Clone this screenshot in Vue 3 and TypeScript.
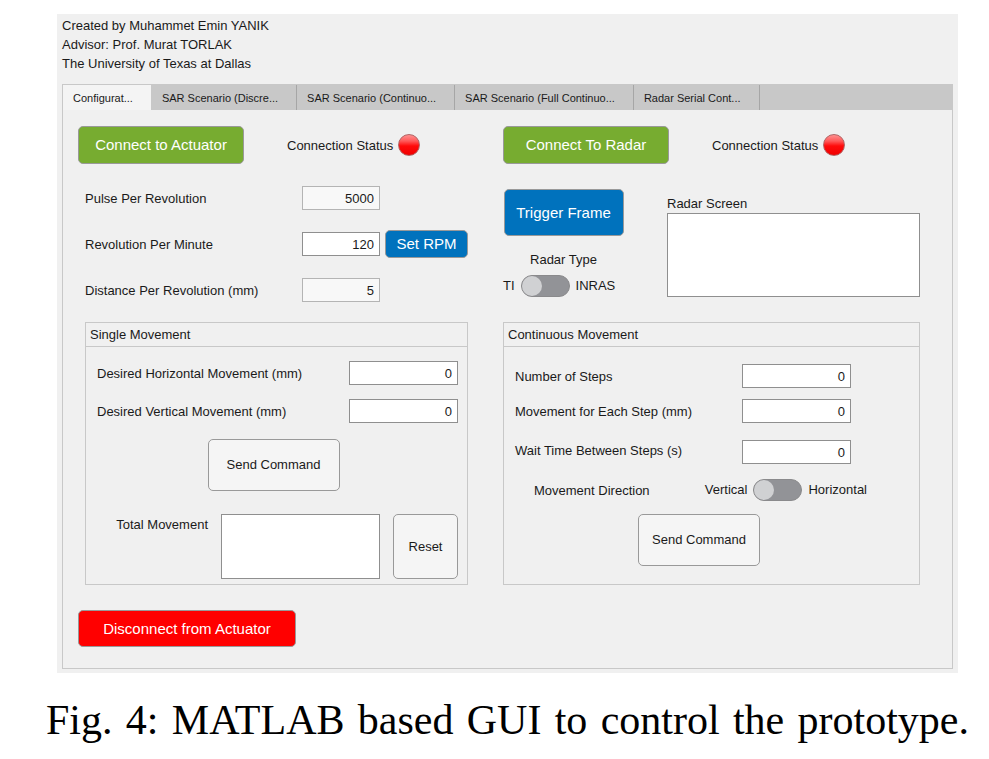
<script setup lang="ts">
import { reactive, ref } from 'vue'

interface Field {
  id: string
  label: string
  value: string
  readonly?: boolean
}

const tabs: string[] = [
  'Configurat...',
  'SAR Scenario (Discre...',
  'SAR Scenario (Continuo...',
  'SAR Scenario (Full Continuo...',
  'Radar Serial Cont...',
]
const activeTab = ref(0)

const motorFields = reactive<Field[]>([
  { id: 'pulse', label: 'Pulse Per Revolution', value: '5000', readonly: true },
  { id: 'rpm', label: 'Revolution Per Minute', value: '120' },
  { id: 'distance', label: 'Distance Per Revolution (mm)', value: '5', readonly: true },
])

const singleFields = reactive<Field[]>([
  { id: 'horizontal', label: 'Desired Horizontal Movement (mm)', value: '0' },
  { id: 'vertical', label: 'Desired Vertical Movement (mm)', value: '0' },
])

const stepFields = reactive<Field[]>([
  { id: 'steps', label: 'Number of Steps', value: '0' },
  { id: 'step-size', label: 'Movement for Each Step (mm)', value: '0' },
  { id: 'wait', label: 'Wait Time Between Steps (s)', value: '0' },
])

const radarInras = ref(false)
const directionHorizontal = ref(false)
const radarLog = ref('')
const totalMovement = ref('')
</script>

<template>
  <figure class="figure">
    <main class="window">
      <header class="credits">
        <div>Created by Muhammet Emin YANIK</div>
        <div>Advisor: Prof. Murat TORLAK</div>
        <div>The University of Texas at Dallas</div>
      </header>

      <section class="tab-group">
        <div class="tab-bar" role="tablist">
          <button
            v-for="(tab, i) in tabs"
            :key="tab"
            type="button"
            role="tab"
            class="tab"
            :class="{ active: i === activeTab }"
            :aria-selected="i === activeTab"
            @click="activeTab = i"
          >{{ tab }}</button>
        </div>

        <div class="panel">
          <div class="column">
            <div class="connect-row">
              <button type="button" class="btn green">Connect to Actuator</button>
              <div class="status">
                <span class="status-label">Connection Status</span>
                <span class="lamp"></span>
              </div>
            </div>

            <div class="settings motor">
              <div v-for="f in motorFields" :key="f.id" class="motor-row">
                <label :for="f.id">{{ f.label }}</label>
                <input :id="f.id" v-model="f.value" class="num" type="text" inputmode="numeric" :readonly="f.readonly" />
                <button v-if="f.id === 'rpm'" type="button" class="btn blue set-rpm">Set RPM</button>
              </div>
            </div>

            <fieldset class="group inset">
              <div class="group-title">Single Movement</div>
              <div class="group-body single">
                <div v-for="f in singleFields" :key="f.id" class="field-row">
                  <label :for="f.id">{{ f.label }}</label>
                  <input :id="f.id" v-model="f.value" class="num wide" type="text" inputmode="numeric" />
                </div>
                <button type="button" class="btn plain send">Send Command</button>
                <div class="total-row">
                  <label for="total">Total Movement</label>
                  <textarea id="total" v-model="totalMovement" class="box"></textarea>
                  <button type="button" class="btn plain" @click="totalMovement = ''">Reset</button>
                </div>
              </div>
            </fieldset>

            <button type="button" class="btn red disconnect">Disconnect from Actuator</button>
          </div>

          <div class="column">
            <div class="connect-row">
              <button type="button" class="btn green">Connect To Radar</button>
              <div class="status">
                <span class="status-label">Connection Status</span>
                <span class="lamp"></span>
              </div>
            </div>

            <div class="settings radar">
              <div class="radar-side">
                <button type="button" class="btn blue trigger">Trigger Frame</button>
                <label for="radar-type">Radar Type</label>
                <div class="switch-row">
                  <span>TI</span>
                  <input id="radar-type" v-model="radarInras" type="checkbox" role="switch" class="switch" />
                  <span>INRAS</span>
                </div>
              </div>
              <div class="radar-screen">
                <label for="radar-log">Radar Screen</label>
                <textarea id="radar-log" v-model="radarLog" class="box"></textarea>
              </div>
            </div>

            <fieldset class="group">
              <div class="group-title">Continuous Movement</div>
              <div class="group-body continuous">
                <div class="steps">
                  <div v-for="f in stepFields" :key="f.id" class="field-row">
                    <label :for="f.id">{{ f.label }}</label>
                    <input :id="f.id" v-model="f.value" class="num wide" type="text" inputmode="numeric" />
                  </div>
                </div>
                <div class="direction-row">
                  <label for="direction">Movement Direction</label>
                  <div class="switch-row">
                    <span>Vertical</span>
                    <input id="direction" v-model="directionHorizontal" type="checkbox" role="switch" class="switch" />
                    <span>Horizontal</span>
                  </div>
                </div>
                <button type="button" class="btn plain send">Send Command</button>
              </div>
            </fieldset>
          </div>
        </div>
      </section>
    </main>

    <figcaption class="caption">Fig. 4: MATLAB based GUI to control the prototype.</figcaption>
  </figure>
</template>

<style>
body {
  background: #fff;
}
</style>

<style scoped>
* {
  box-sizing: border-box;
}

.figure {
  margin: 0;
  padding: 14px 20px 0 46px;
}

.window {
  margin: 0 11px;
  padding: 2px 5px 4px;
  background: #f0f0f0;
  color: #1a1a1a;
  font: 13px/18px "Liberation Sans", Arial, sans-serif;
}

button,
input,
textarea {
  font: inherit;
  color: inherit;
  margin: 0;
}

.credits {
  line-height: 19px;
  margin-bottom: 11px;
}

.tab-group {
  border: 1px solid #c8c8c8;
}

.tab-bar {
  display: flex;
  height: 25px;
  background: #c8c8c8;
}

.tab {
  padding: 0 18px 0 10px;
  border: 0;
  border-right: 1px solid #a6a6a6;
  background: transparent;
  font-size: 11px;
  white-space: nowrap;
}

.tab.active {
  border-right-color: #c8c8c8;
  background: #f4f4f4;
}

.panel {
  display: grid;
  grid-template-columns: minmax(0, 390fr) minmax(0, 417fr);
  column-gap: 35px;
  padding: 16px 32px 21px 15px;
}

.column {
  display: flex;
  flex-direction: column;
}

.connect-row {
  display: flex;
  align-items: center;
  gap: 43px;
}

.status {
  display: flex;
  align-items: center;
  gap: 5px;
}

.status-label,
.motor-row label,
.field-row label,
.direction-row label {
  padding-top: 2px;
}

.lamp {
  width: 22px;
  height: 22px;
  border: 1px solid #b06464;
  border-radius: 50%;
  background: linear-gradient(#ff9090 0%, #ff5a5a 30%, #ff0a0a 55%, #f00000 100%);
}

.btn {
  display: flex;
  align-items: center;
  justify-content: center;
  padding: 0;
  border: 1px solid #999;
  border-radius: 5px;
  white-space: nowrap;
}

.green,
.blue,
.red {
  color: #fff;
  font-size: 15px;
}

.green {
  width: 166px;
  height: 38px;
  background: #77ac30;
}

.blue {
  background: #0072bd;
}

.red {
  background: #f00;
}

.plain {
  background: #f5f5f5;
}

.settings {
  height: 158px;
}

.motor {
  display: flex;
  flex-direction: column;
  gap: 18px;
  padding: 20px 0 0 7px;
}

.motor-row {
  display: grid;
  grid-template-columns: 1fr 78px 83px;
  column-gap: 5px;
  align-items: center;
  height: 28px;
}

.set-rpm {
  height: 28px;
}

.num {
  width: 78px;
  height: 24px;
  padding: 0 5px;
  border: 1px solid #8f8f8f;
  border-radius: 0;
  background: #fff;
  text-align: right;
}

.num:read-only {
  border-color: #b4b4b4;
  background: #f8f8f8;
}

.num.wide {
  width: 109px;
}

.group {
  min-width: 0;
  height: 263px;
  margin: 0;
  padding: 0;
  border: 1px solid #c8c8c8;
}

.group.inset {
  margin-left: 7px;
}

.group-title {
  padding: 3px 4px 2px;
  border-bottom: 1px solid #c8c8c8;
}

.group-body {
  display: flex;
  flex-direction: column;
  gap: 14px;
}

.single {
  padding: 14px 9px 0 11px;
}

.continuous {
  padding: 17px 68px 0 11px;
}

.steps {
  display: flex;
  flex-direction: column;
  gap: 11px;
}

.field-row {
  display: flex;
  align-items: center;
  justify-content: space-between;
}

.steps .field-row:last-child {
  align-items: flex-start;
  margin-top: 6px;
}

.send {
  align-self: center;
  width: 132px;
  height: 52px;
}

.single .send {
  margin: 2px 8px 9px 0;
}

.continuous .send {
  width: 122px;
  margin-left: 32px;
}

.total-row {
  display: grid;
  grid-template-columns: 1fr 159px 65px;
  column-gap: 13px;
  height: 65px;
}

.total-row label {
  padding-top: 2px;
  text-align: right;
}

.box {
  display: block;
  width: 100%;
  height: 100%;
  padding: 4px;
  border: 1px solid #8f8f8f;
  border-radius: 0;
  background: #fff;
  resize: none;
}

.disconnect {
  width: 218px;
  height: 37px;
  margin-top: 25px;
}

.radar {
  display: grid;
  grid-template-columns: 121px minmax(0, 1fr);
  column-gap: 43px;
  padding-top: 25px;
}

.radar-side {
  display: flex;
  flex-direction: column;
  align-items: center;
}

.trigger {
  width: 120px;
  height: 47px;
  margin-bottom: 15px;
}

.switch-row {
  display: flex;
  align-items: center;
  gap: 6px;
}

.radar-side .switch-row {
  align-self: flex-start;
  margin-top: 6px;
}

.radar-screen {
  display: flex;
  flex-direction: column;
  padding-top: 6px;
}

.radar-screen .box {
  height: 84px;
}

.switch {
  appearance: none;
  display: flex;
  width: 49px;
  height: 22px;
  border: 1px solid #8a8a8c;
  border-radius: 11px;
  background: #929397;
}

.switch::before {
  content: "";
  width: 20px;
  height: 20px;
  border-radius: 50%;
  background: #d0d1d3;
}

.switch:checked {
  justify-content: flex-end;
}

.direction-row {
  display: flex;
  align-items: center;
  justify-content: space-between;
  height: 24px;
  margin-right: -16px;
  padding-left: 19px;
}

.continuous .send {
  margin-top: -2px;
}

.caption {
  margin-top: 22px;
  color: #000;
  font: 42px/50px "Liberation Serif", "Times New Roman", serif;
  text-align: justify;
  text-align-last: justify;
}
</style>
